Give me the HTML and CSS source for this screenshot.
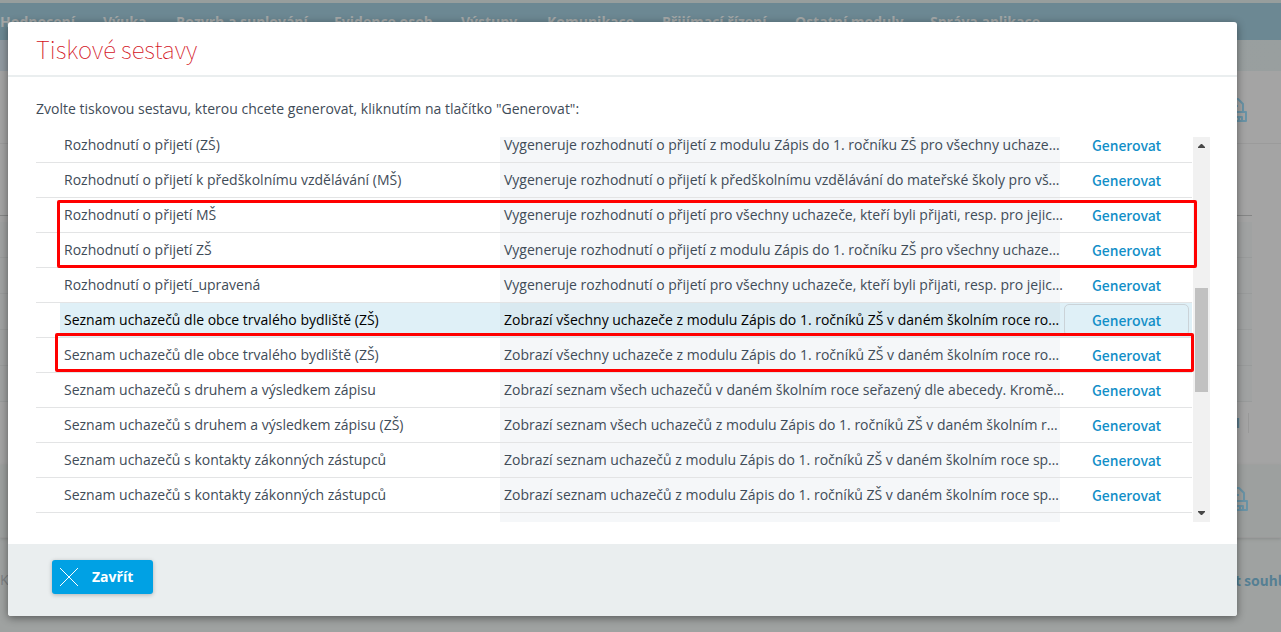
FILE: index.html
```html
<!DOCTYPE html>
<html lang="cs">
<head>
<meta charset="utf-8">
<title>Tiskové sestavy</title>
<link rel="stylesheet" href="styles.css">
</head>
<body>
<svg class="defs" aria-hidden="true">
  <symbol id="printer" viewBox="0 0 26 26">
    <path d="M5 15V2h11l5 5v8M12 9h4M2 24v-9h22v9zM6 24v-4h14v4M20 20h-3v4"/>
  </symbol>
</svg>
<div class="page">
  <nav class="nav">
    <a href="#">Hodnocení</a><a href="#">Výuka</a><a href="#">Rozvrh a suplování</a><a href="#">Evidence osob</a><a href="#">Výstupy</a><a href="#">Komunikace</a><a href="#">Přijímací řízení</a><a href="#">Ostatní moduly</a><a href="#">Správa aplikace</a>
  </nav>
  <div class="subnav"></div>
  <section class="tools"><svg class="printer"><use href="#printer"/></svg></section>
  <section class="listing">
    <div class="grid"><div class="line"></div><div class="line"></div><div class="line"></div><div class="line"></div><div class="line"></div></div>
    <div class="pager"><span>1</span></div>
  </section>
  <section class="tools tools-bottom"><svg class="printer"><use href="#printer"/></svg></section>
  <footer class="links"><span>KA</span><a href="#">t souhl</a></footer>
</div>

<div class="modal" role="dialog" aria-labelledby="title">
  <header class="modal-head"><h1 id="title">Tiskové sestavy</h1></header>
  <div class="modal-body">
    <p class="intro">Zvolte tiskovou sestavu, kterou chcete generovat, kliknutím na tlačítko "Generovat":</p>
    <div class="list">
      <div class="viewport">
        <table class="reports">
          <colgroup><col class="c-pad"><col><col class="c-desc"><col class="c-act"></colgroup>
          <tbody>
            <tr><td></td><td>Rozhodnutí o přijetí (ZŠ)</td><td>Vygeneruje rozhodnutí o přijetí z modulu Zápis do 1. ročníku ZŠ pro všechny uchaze…</td><td><button>Generovat</button></td></tr>
            <tr><td></td><td>Rozhodnutí o přijetí k předškolnímu vzdělávání (MŠ)</td><td>Vygeneruje rozhodnutí o přijetí k předškolnímu vzdělávání do mateřské školy pro vš…</td><td><button>Generovat</button></td></tr>
            <tr><td></td><td>Rozhodnutí o přijetí MŠ</td><td>Vygeneruje rozhodnutí o přijetí pro všechny uchazeče, kteří byli přijati, resp. pro jejic…</td><td><button>Generovat</button></td></tr>
            <tr><td></td><td>Rozhodnutí o přijetí ZŠ</td><td>Vygeneruje rozhodnutí o přijetí z modulu Zápis do 1. ročníku ZŠ pro všechny uchaze…</td><td><button>Generovat</button></td></tr>
            <tr><td></td><td>Rozhodnutí o přijetí_upravená</td><td>Vygeneruje rozhodnutí o přijetí pro všechny uchazeče, kteří byli přijati, resp. pro jejic…</td><td><button>Generovat</button></td></tr>
            <tr class="active"><td></td><td>Seznam uchazečů dle obce trvalého bydliště (ZŠ)</td><td>Zobrazí všechny uchazeče z modulu Zápis do 1. ročníků ZŠ v daném školním roce ro…</td><td><button>Generovat</button></td></tr>
            <tr><td></td><td>Seznam uchazečů dle obce trvalého bydliště (ZŠ)</td><td>Zobrazí všechny uchazeče z modulu Zápis do 1. ročníků ZŠ v daném školním roce ro…</td><td><button>Generovat</button></td></tr>
            <tr><td></td><td>Seznam uchazečů s druhem a výsledkem zápisu</td><td>Zobrazí seznam všech uchazečů v daném školním roce seřazený dle abecedy. Kromě…</td><td><button>Generovat</button></td></tr>
            <tr><td></td><td>Seznam uchazečů s druhem a výsledkem zápisu (ZŠ)</td><td>Zobrazí seznam všech uchazečů z modulu Zápis do 1. ročníků ZŠ v daném školním r…</td><td><button>Generovat</button></td></tr>
            <tr><td></td><td>Seznam uchazečů s kontakty zákonných zástupců</td><td>Zobrazí seznam uchazečů z modulu Zápis do 1. ročníků ZŠ v daném školním roce sp…</td><td><button>Generovat</button></td></tr>
            <tr><td></td><td>Seznam uchazečů s kontakty zákonných zástupců</td><td>Zobrazí seznam uchazečů z modulu Zápis do 1. ročníků ZŠ v daném školním roce sp…</td><td><button>Generovat</button></td></tr>
            <tr class="rest"><td></td><td></td><td></td><td></td></tr>
          </tbody>
        </table>
      </div>
      <div class="scrollbar">
        <svg viewBox="0 0 7 4"><path d="M0 4v-1L3 0h1l3 3v1z"/></svg>
        <div class="track"><div class="thumb"></div></div>
        <svg viewBox="0 0 7 4"><path d="M0 0v1l3 3h1l3-3v-1z"/></svg>
      </div>
      <div class="mark mark-pair"></div>
      <div class="mark mark-single"></div>
    </div>
  </div>
  <footer class="modal-foot">
    <button class="close"><svg viewBox="0 0 20 20"><path d="M1 1l18 18M19 1L1 19"/></svg>Zavřít</button>
  </footer>
</div>
</body>
</html>
```
FILE: styles.css
```css
* { box-sizing: border-box; }
body {
  margin: 0;
  min-height: 100vh;
  position: relative;
  overflow: hidden;
  font: 14px/20px "Open Sans", "Noto Sans", sans-serif;
  color: #3f4c58;
  background: #9fa2a1;
}
button { font: inherit; cursor: pointer; }
a { color: inherit; text-decoration: none; }
.defs { position: absolute; width: 0; height: 0; }

.page { min-height: 100vh; display: flex; flex-direction: column; border-top: 3px solid #979e9d; }
.nav {
  display: grid;
  grid-template-columns: 103px 73px 158px 127px 86px 115px 133px 135px auto;
  height: 37px;
  align-items: center;
  background: #6c8893;
  color: #a5a8a8;
  font-weight: 700;
  white-space: nowrap;
}
.subnav { height: 31px; background: linear-gradient(90deg, #919aa1, #999f9f); }
.tools { height: 73px; padding: 26px 33px; background: #a4a4a4; border-bottom: 1px solid #9b9b9b; display: flex; justify-content: flex-end; }
.printer { width: 26px; height: 26px; fill: none; stroke: #6994a7; stroke-width: 2; stroke-linejoin: round; }
.tools-bottom { background: #9da09f; box-shadow: 0 1px 3px #888c8b; padding: 21px 32px; }
.listing { height: 321px; padding: 71px 29px 0 0; background: #a4a4a4; }
.grid { border-top: 1px solid #858686; padding-top: 6px; }
.line { height: 36px; border-bottom: 1px solid #999b9b; background: #a0a2a2; }
.pager { display: flex; justify-content: flex-end; padding: 11px 3px; color: #5c7784; font-weight: 700; }
.pager span { border-right: 1px solid #989898; padding-right: 7px; }
.links { flex: 1; display: flex; justify-content: space-between; padding-top: 32px; color: #7c8082; }
.links a { width: 46px; white-space: nowrap; color: #557f93; font: 700 14px/20px "Noto Sans CJK SC", sans-serif; }

.modal {
  position: absolute;
  top: 22px;
  left: 8px;
  right: 44px;
  background: #fff;
  border-radius: 3px;
  box-shadow: 0 2px 8px rgba(0, 0, 0, .45);
  overflow: hidden;
}
.modal-head { padding: 11px 28px 10px; border-bottom: 2px solid #eaeeef; }
h1 { margin: 0; font: 100 24px/32px "Noto Sans CJK SC", "Open Sans", sans-serif; color: #d3121c; }
.modal-body { padding: 22px 27px 22px 28px; }
.intro { margin: 0 0 18px; }
.list { position: relative; display: flex; gap: 1px; }
.viewport { flex: 1; min-width: 0; overflow: hidden; }
.reports { width: 100%; margin-top: -9px; table-layout: fixed; border-collapse: separate; border-spacing: 0; }
.c-pad { width: 24px; }
.c-desc { width: 560px; }
.c-act { width: 132px; }
td { height: 35px; padding: 0 3px 0 4px; border-bottom: 1px solid #e3e4e5; white-space: nowrap; }
td:nth-child(3) { background: #f5f7f9; }
td button {
  display: block;
  width: 100%;
  height: 32px;
  padding: 0;
  border: 1px solid transparent;
  border-radius: 5px;
  background: none;
  color: #128fc8;
  font: 500 14px/20px "Noto Sans CJK SC", "Open Sans", sans-serif;
}
.active { color: #000; }
.active td { background: #dff0f7; }
.active td:first-child { background: none; }
.active td:nth-child(3) { background: #d9e9f0; }
.active button { border-color: #cbd3d8; }
.rest td { height: 9px; border: 0; }

.scrollbar { width: 17px; background: #f1f1f1; display: flex; flex-direction: column; align-items: center; padding: 7px 2px 7px; }
.scrollbar svg { width: 7px; height: 4px; fill: #484848; }
.track { flex: 1; width: 100%; padding-top: 140px; }
.thumb { height: 104px; background: #c1c1c1; }

.mark { position: absolute; border: 3px solid #f00; border-radius: 2px; }
.mark-pair { top: 63px; left: 21px; right: 13px; height: 68px; }
.mark-single { top: 196px; left: 19px; right: 16px; height: 39px; }

.modal-foot { padding: 16px 44px 22px; background: #eaeeef; }
.close {
  display: flex;
  align-items: center;
  gap: 13px;
  height: 34px;
  padding: 0 20px 0 7px;
  border: 0;
  border-radius: 3px;
  background: #00a1e4;
  color: #fff;
  font-weight: 700;
  box-shadow: 0 1px 4px rgba(0, 0, 0, .25);
}
.close svg { width: 20px; height: 20px; fill: none; stroke: #fff; stroke-width: 1; }
```
